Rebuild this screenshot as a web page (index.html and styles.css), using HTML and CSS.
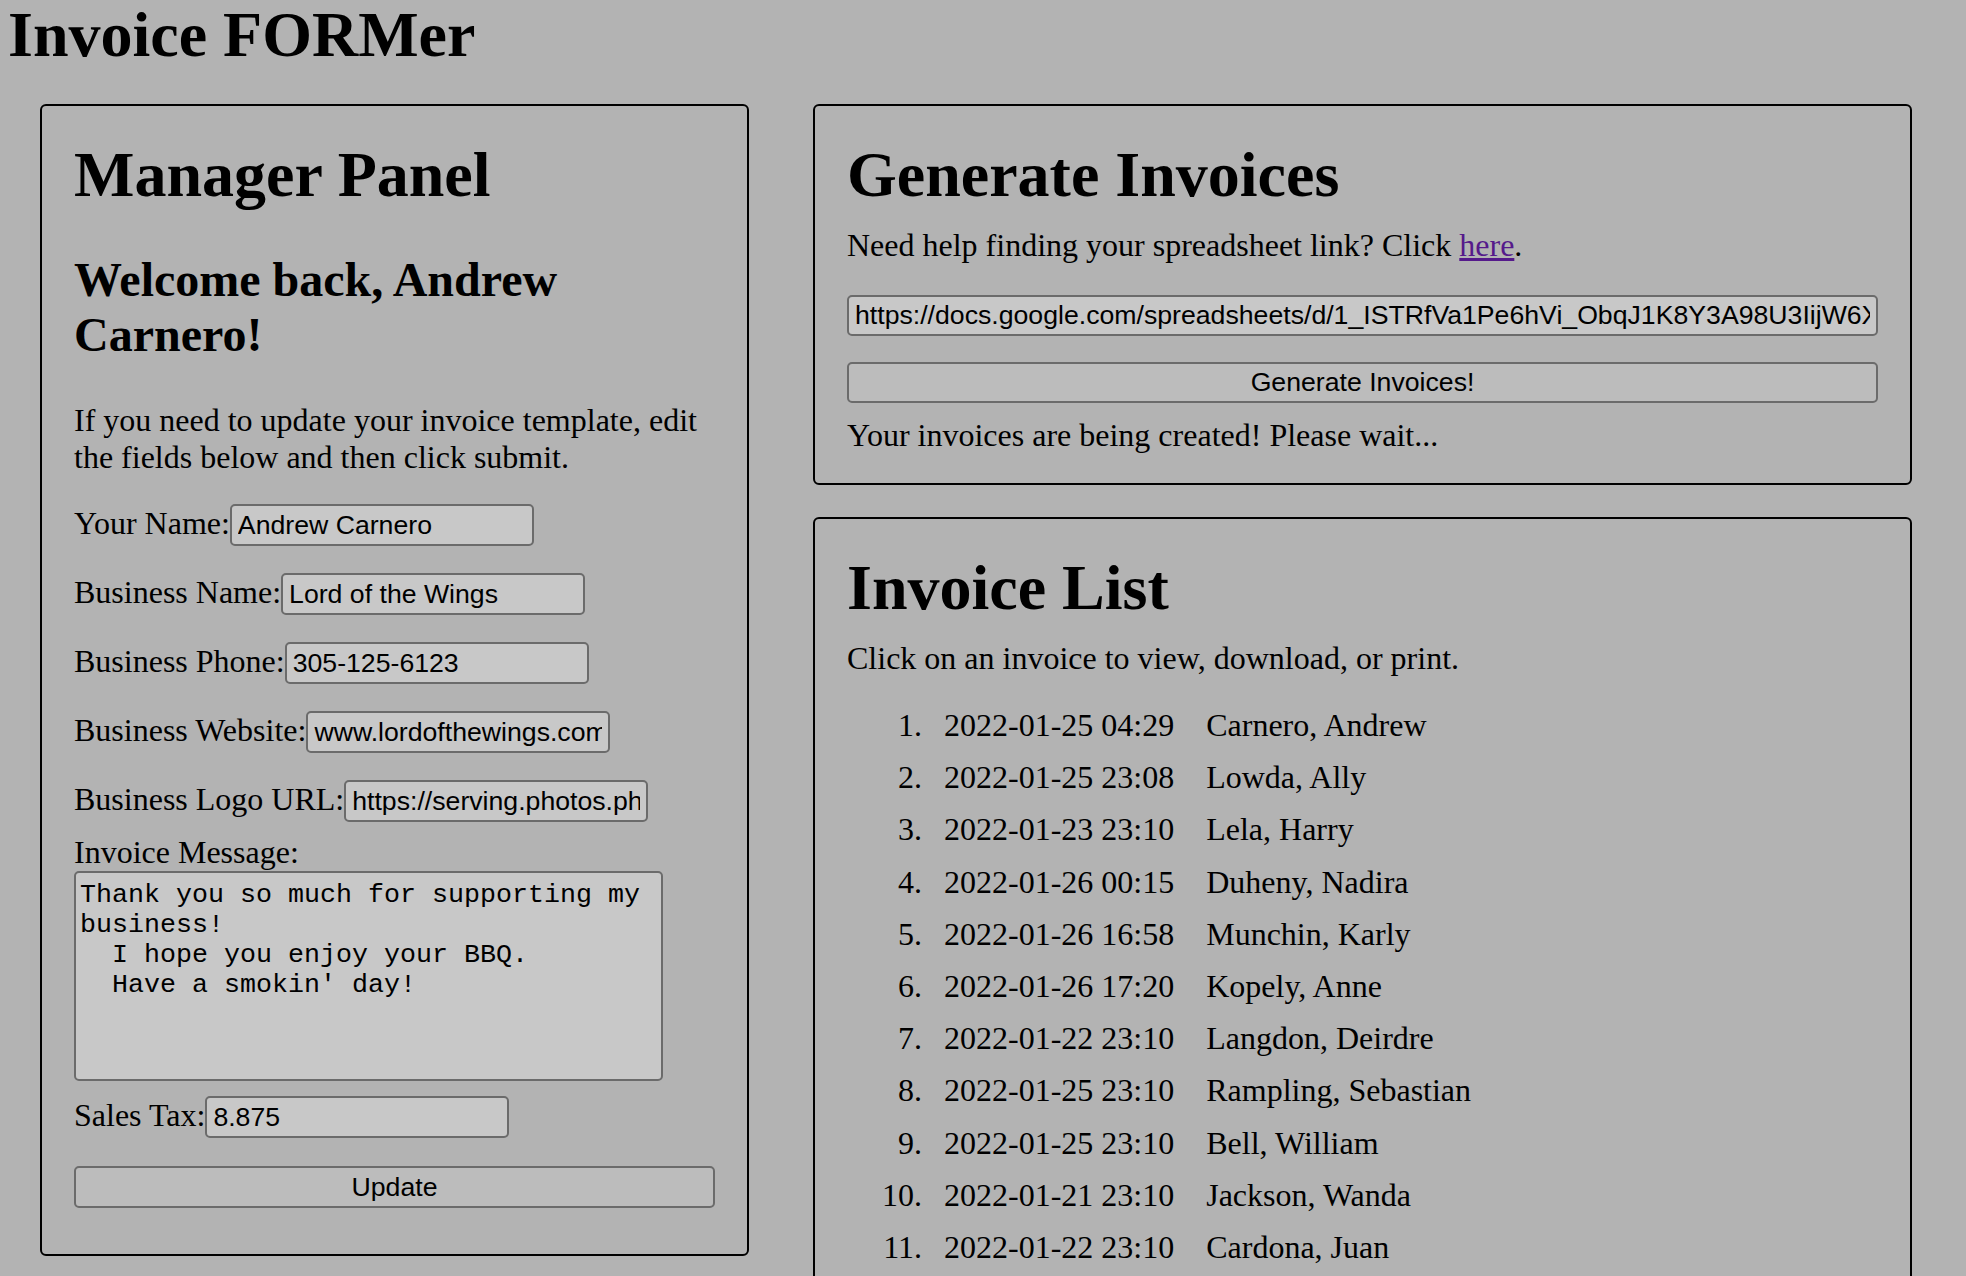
FILE: index.html
```html
<!DOCTYPE html>
<html lang="en">
<head>
<meta charset="utf-8">
<title>Invoice FORMer</title>
<link rel="stylesheet" href="styles.css">
</head>
<body>
<h1 class="site-title">Invoice FORMer</h1>
<main class="layout">
  <section class="panel manager">
    <h1 class="panel-title">Manager Panel</h1>
    <h2 class="welcome">Welcome back, Andrew Carnero!</h2>
    <p class="intro">If you need to update your invoice template, edit the fields below and then click submit.</p>
    <form class="mgr-form">
      <div class="row"><label>Your Name:</label><input class="field" type="text" value="Andrew Carnero"></div>
      <div class="row"><label>Business Name:</label><input class="field" type="text" value="Lord of the Wings"></div>
      <div class="row"><label>Business Phone:</label><input class="field" type="text" value="305-125-6123"></div>
      <div class="row"><label>Business Website:</label><input class="field" type="text" value="www.lordofthewings.com"></div>
      <div class="row"><label>Business Logo URL:</label><input class="field" type="text" value="https://serving.photos.photobucket.com/logo.png"></div>
      <label class="msg-label">Invoice Message:</label>
      <textarea class="msg">Thank you so much for supporting my business!
  I hope you enjoy your BBQ.
  Have a smokin' day!</textarea>
      <div class="row tax-row"><label>Sales Tax:</label><input class="field" type="text" value="8.875"></div>
      <button class="btn update" type="button">Update</button>
    </form>
  </section>
  <div class="right-col">
    <section class="panel gen">
      <h1 class="panel-title">Generate Invoices</h1>
      <p class="help">Need help finding your spreadsheet link? Click <a class="link" href="#">here</a>.</p>
      <input class="field url-field" type="text" value="https://docs.google.com/spreadsheets/d/1_ISTRfVa1Pe6hVi_ObqJ1K8Y3A98U3IijW6XqZ/edit#gid=0">
      <button class="btn gen-btn" type="button">Generate Invoices!</button>
      <p class="status">Your invoices are being created! Please wait...</p>
    </section>
    <section class="panel list">
      <h1 class="panel-title">Invoice List</h1>
      <p class="help">Click on an invoice to view, download, or print.</p>
      <ol class="inv-list">
        <li><span class="num">1.</span><span class="date">2022-01-25 04:29</span><span class="name">Carnero, Andrew</span></li>
        <li><span class="num">2.</span><span class="date">2022-01-25 23:08</span><span class="name">Lowda, Ally</span></li>
        <li><span class="num">3.</span><span class="date">2022-01-23 23:10</span><span class="name">Lela, Harry</span></li>
        <li><span class="num">4.</span><span class="date">2022-01-26 00:15</span><span class="name">Duheny, Nadira</span></li>
        <li><span class="num">5.</span><span class="date">2022-01-26 16:58</span><span class="name">Munchin, Karly</span></li>
        <li><span class="num">6.</span><span class="date">2022-01-26 17:20</span><span class="name">Kopely, Anne</span></li>
        <li><span class="num">7.</span><span class="date">2022-01-22 23:10</span><span class="name">Langdon, Deirdre</span></li>
        <li><span class="num">8.</span><span class="date">2022-01-25 23:10</span><span class="name">Rampling, Sebastian</span></li>
        <li><span class="num">9.</span><span class="date">2022-01-25 23:10</span><span class="name">Bell, William</span></li>
        <li><span class="num">10.</span><span class="date">2022-01-21 23:10</span><span class="name">Jackson, Wanda</span></li>
        <li><span class="num">11.</span><span class="date">2022-01-22 23:10</span><span class="name">Cardona, Juan</span></li>
      </ol>
    </section>
  </div>
</main>
</body>
</html>
```

FILE: styles.css
```css
html, body {
  background: #b3b3b3;
}
body {
  margin: 0;
  font-family: "Liberation Serif", "Times New Roman", serif;
  font-size: 32px;
  color: #000;
}
.site-title {
  font-size: 64px;
  font-weight: bold;
  line-height: 69px;
  margin: 0 0 35px 8px;
}
.layout {
  display: flex;
  align-items: flex-start;
  gap: 64px;
  padding-left: 40px;
}
.panel {
  border: 2px solid #000;
  border-radius: 6px;
  padding: 32px;
  box-sizing: border-box;
}
.manager {
  width: 709px;
  flex: none;
  padding-bottom: 46px;
}
.right-col {
  width: 1099px;
  flex: none;
  display: flex;
  flex-direction: column;
  gap: 32px;
}
.panel-title {
  font-size: 64px;
  font-weight: bold;
  line-height: normal;
  margin: 0;
}
.welcome {
  font-size: 48px;
  font-weight: bold;
  line-height: normal;
  margin: 40px 0 0;
}
.intro {
  margin: 40px 0 0;
}
.mgr-form {
  display: flex;
  flex-direction: column;
  align-items: flex-start;
  margin-top: 28px;
}
.row {
  display: flex;
  align-items: baseline;
}
.row + .row {
  margin-top: 27px;
}
.field {
  width: 304px;
  height: 42px;
  box-sizing: border-box;
  margin: 0;
  padding: 2px 6px;
  border: 2px solid #6b6b6b;
  border-radius: 5px;
  background: #c8c8c8;
  color: #000;
  font-family: "Liberation Sans", Arial, sans-serif;
  font-size: 26.67px;
}
.msg-label {
  margin-top: 12px;
}
.msg {
  width: 589px;
  height: 210px;
  box-sizing: border-box;
  margin: 0;
  padding: 7px 4px 3px;
  border: 2px solid #6b6b6b;
  border-radius: 5px;
  background: #c8c8c8;
  color: #000;
  font-family: "Liberation Mono", "Courier New", monospace;
  font-size: 26.67px;
  line-height: normal;
  resize: none;
}
.tax-row {
  margin-top: 15px;
}
.btn {
  height: 42px;
  box-sizing: border-box;
  margin: 0;
  padding: 0 8px;
  border: 2px solid #6b6b6b;
  border-radius: 5px;
  background: #bcbcbc;
  color: #000;
  font-family: "Liberation Sans", Arial, sans-serif;
  font-size: 26.67px;
}
.update {
  align-self: stretch;
  margin-top: 28px;
}
.gen {
  padding-bottom: 29px;
}
.help {
  margin: 15px 0 0;
}
.link {
  color: #551a8b;
  text-decoration: underline;
}
.url-field {
  display: block;
  width: 100%;
  height: 41px;
  margin-top: 31px;
}
.gen-btn {
  display: block;
  width: 100%;
  height: 41px;
  margin-top: 26px;
}
.status {
  margin: 14px 0 0;
}
.inv-list {
  list-style: none;
  margin: 30px 0 0;
  padding: 0;
}
.inv-list li {
  display: flex;
  margin-bottom: 15.2px;
}
.num {
  width: 75px;
  text-align: right;
  margin-right: 22px;
  flex: none;
}
.date {
  margin-right: 32px;
}
```
